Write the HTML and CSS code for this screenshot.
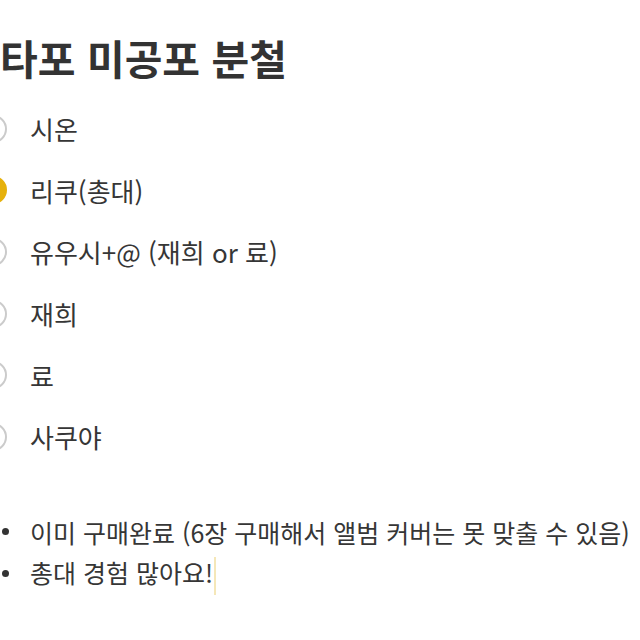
FILE: index.html
```html
<!DOCTYPE html>
<html lang="ko">
  <head>
    <meta charset="UTF-8" />
    <meta name="viewport" content="width=device-width, initial-scale=1.0" />
    <title>타포 미공포 분철</title>
    <link rel="stylesheet" href="styles.css">
  </head>
  <body>
    <div class="page">
      <h1 class="title">타포 미공포 분철</h1>

      <ul class="options">
        <li class="option"><span class="radio"></span>시온</li>
        <li class="option"><span class="radio checked"></span>리쿠(총대)</li>
        <li class="option"><span class="radio"></span>유우시+@ (재희 or 료)</li>
        <li class="option"><span class="radio"></span>재희</li>
        <li class="option"><span class="radio"></span>료</li>
        <li class="option"><span class="radio"></span>사쿠야</li>
      </ul>

      <ul class="notes">
        <li class="note"><span>이미 구매완료 (6장 구매해서 앨범 커버는 못 맞출 수 있음)</span></li>
        <li class="note"><span>총대 경험 많아요!<span class="caret"></span></span></li>
      </ul>
    </div>
  </body>
</html>
```

FILE: styles.css
```css
body {
  margin: 0;
  background-color: #fff;
  color: #363636;
  font-family: "Noto Sans CJK KR", "Noto Sans", sans-serif;
  overflow: hidden;
}

.page {
  padding-top: 32px;
  margin-left: -21px;
  white-space: nowrap;
}

.title {
  margin: 0 0 0 21px;
  font-size: 41px;
  line-height: 50px;
  font-weight: 700;
  color: #333;
}

.options {
  list-style: none;
  margin: 16px 0 0;
  padding: 0;
}

.option {
  display: flex;
  align-items: center;
  gap: 23px;
  height: 61.6px;
  font-size: 26px;
}

.radio {
  width: 24px;
  height: 24px;
  border: 2px solid #cbcbcb;
  border-radius: 50%;
  flex-shrink: 0;
}

.radio.checked {
  background-color: #e6b10c;
  border-color: #e6b10c;
}

.notes {
  list-style: none;
  margin: 44px 0 0;
  padding: 0 0 0 23px;
  font-size: 25px;
  line-height: 40px;
}

.note {
  display: flex;
  align-items: center;
  gap: 21px;
}

.note::before {
  content: "";
  width: 7px;
  height: 7px;
  border-radius: 50%;
  background-color: #333;
  flex-shrink: 0;
}

.caret {
  display: inline-block;
  width: 2px;
  height: 38px;
  margin-left: 1px;
  vertical-align: middle;
  background-color: #f5e7b8;
}
```
